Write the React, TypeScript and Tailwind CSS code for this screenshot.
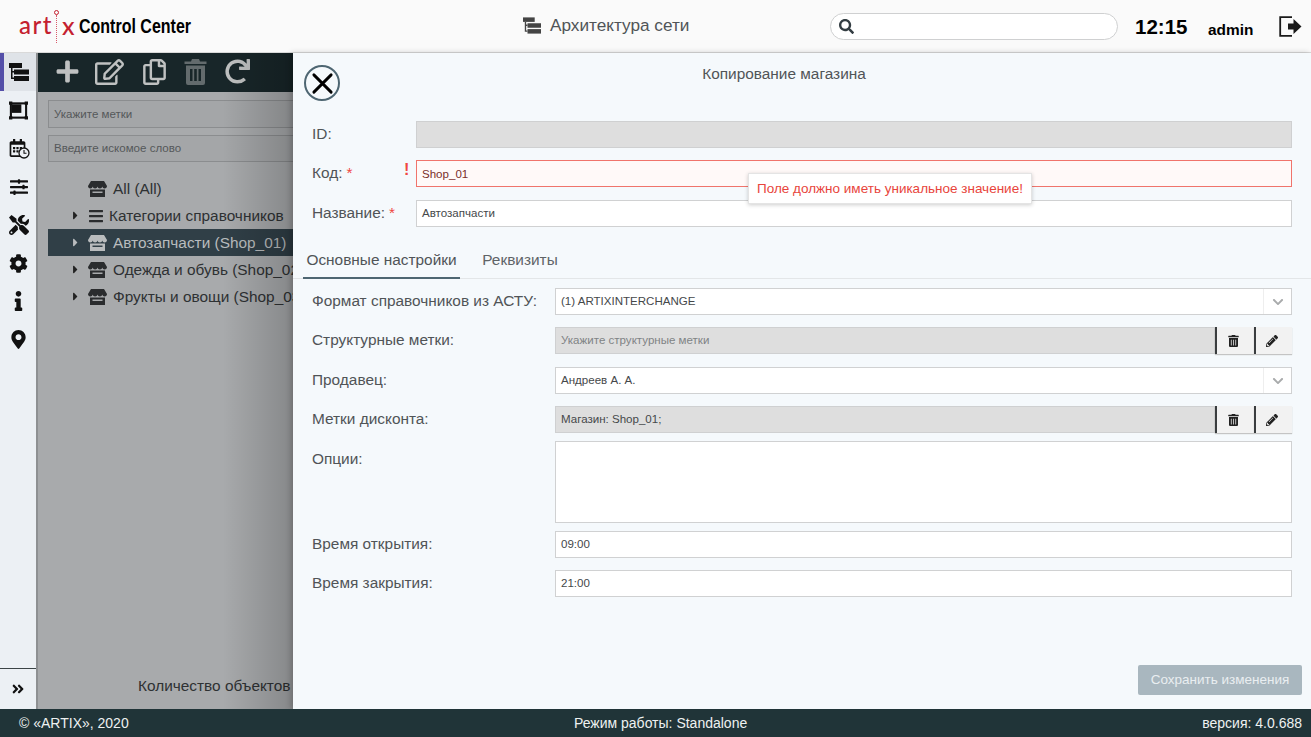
// App.tsx
import type { ReactNode } from 'react'
import {
  FaPlus, FaRegEdit, FaRegCopy, FaRedo, FaSlidersH, FaTools, FaCog, FaInfo,
  FaMapMarkerAlt, FaBars, FaCaretRight, FaSearch, FaTrashAlt, FaPencilAlt, FaChevronDown,
  FaRegCalendarAlt, FaAngleDoubleRight,
} from 'react-icons/fa'

function NetworkIcon({ className }: { className?: string }) {
  return (
    <svg viewBox="0 0 20 18" className={className} fill="currentColor">
      <rect x="0" y="0" width="13" height="5" />
      <rect x="5" y="6.500" width="15" height="5" />
      <rect x="5" y="13" width="15" height="5" />
      <path d="M2 5h1.500v3H5v1.500H3.500v5H5V16H2z" />
    </svg>
  )
}

function SplitIcon({ className }: { className?: string }) {
  return (
    <svg viewBox="0 0 20 19" className={className} fill="none" stroke="currentColor">
      <rect x="2" y="2" width="16" height="15" strokeWidth="2.200" />
      <rect x="3" y="3" width="10" height="9" fill="currentColor" stroke="none" />
      <path d="M0 0h3.500v3.500H0zM16.500 0H20v3.500h-3.500zM0 15.500h3.500V19H0zM16.500 15.500H20V19h-3.500z" fill="currentColor" stroke="none" />
    </svg>
  )
}

function CalendarClockIcon({ className }: { className?: string }) {
  return (
    <span className={`relative ${className}`}>
      <FaRegCalendarAlt className="w-[17px] h-[18px]" />
      <svg viewBox="0 0 12 12" className="absolute right-[-2px] bottom-[-1px] w-[12px] h-[12px] text-[#111]">
        <circle cx="6" cy="6" r="5" fill="#eceff3" stroke="currentColor" strokeWidth="1.300" />
        <path d="M6 3v3.300h2.500" fill="none" stroke="currentColor" strokeWidth="1.100" />
      </svg>
    </span>
  )
}

function StoreIcon({ className }: { className?: string }) {
  return (
    <svg viewBox="0 0 19 16" className={className} fill="currentColor">
      <path d="M3 0h13l3 5c0 1.500-1 2.500-2.300 2.500S14.500 6.500 14.300 5.500c-.2 1-1.200 2-2.400 2s-2.200-1-2.400-2c-.2 1-1.200 2-2.400 2s-2.200-1-2.400-2C4.500 6.500 3.600 7.500 2.300 7.500S0 6.500 0 5z" />
      <path d="M2 8.500h15V16H2zM4.500 10.500v1.500h10v-1.500z" fillRule="evenodd" />
    </svg>
  )
}

function LogoutIcon({ className }: { className?: string }) {
  return (
    <svg viewBox="0 0 23 21" className={className}>
      <path d="M13 1.200H1.200v18.600H13" fill="none" stroke="currentColor" strokeWidth="1.800" />
      <path d="M9 7.500h5.500V3l8 7.500-8 7.500v-4.500H9z" fill="currentColor" />
    </svg>
  )
}

function TrashIcon({ className }: { className?: string }) {
  return (
    <svg viewBox="0 0 22 26" className={className} fill="currentColor">
      <path d="M7.500 0h7l1 2.500H22v2.500H0V2.500h6.500z" />
      <path d="M1.500 6.500h19V24a2 2 0 0 1-2 2h-15a2 2 0 0 1-2-2zM5.500 10v12H8V10zM9.700 10v12h2.600V10zM14 10v12h2.500V10z" fillRule="evenodd" />
    </svg>
  )
}

function CloseIcon({ className }: { className?: string }) {
  return (
    <svg viewBox="0 0 24 24" className={className} fill="none" stroke="currentColor" strokeWidth="3" strokeLinecap="round">
      <path d="M3 3l18 18M21 3L3 21" />
    </svg>
  )
}

function Logo() {
  return (
    <div className="w-[60px] h-[36px] flex items-center text-[#c4202f] font-['Lato',sans-serif] text-[24px] leading-none">
      <span className="w-[31px] tracking-[1.500px] font-medium pb-[2px]">art</span>
      <span className="w-[12px] h-[36px] flex flex-col items-center pt-[2px]">
        <span className="w-[5px] h-[5px] rounded-full border border-[#c4202f]" />
        <span className="h-[28px] border-l border-dotted border-[#d8596a]" />
      </span>
      <span className="font-medium text-[25px] pb-[2px]">x</span>
    </div>
  )
}

const NAV_ITEMS = [
  <SplitIcon key="split" className="w-[19px] h-[19px]" />,
  <CalendarClockIcon key="cal" className="block w-[19px] h-[19px]" />,
  <FaSlidersH key="sl" className="w-[20px] h-[18px]" />,
  <FaTools key="tl" className="w-[20px] h-[20px]" />,
  <FaCog key="cg" className="w-[19px] h-[19px]" />,
  <FaInfo key="in" className="w-[19px] h-[20px]" />,
  <FaMapMarkerAlt key="mp" className="w-[15px] h-[19px]" />,
]

function Sidebar() {
  return (
    <div className="w-[38px] shrink-0 bg-[#ecf0f4] flex flex-col text-[#111] border-r-2 border-[#8e9092]">
      <div className="h-[38px] bg-[#dfe3e8] border-l-4 border-[#544fa8] flex items-center justify-center pr-[2px]">
        <NetworkIcon className="w-[20px] h-[18px]" />
      </div>
      {NAV_ITEMS.map((icon, i) => (
        <div key={i} className="h-[38.250px] flex items-center justify-center pl-[1px]">{icon}</div>
      ))}
      <div className="mt-auto h-[41px] border-t border-[#3b4446] flex items-center justify-center">
        <FaAngleDoubleRight className="w-[14px] h-[14px]" />
      </div>
    </div>
  )
}

function TreeRow({ text, arrow, selected, bars }: { text: string; arrow?: boolean; selected?: boolean; bars?: boolean }) {
  return (
    <div className={`h-[27px] flex items-center whitespace-nowrap text-[15.400px] ${selected ? 'bg-[#303f47] text-[#b9bcbe]' : 'text-[#2e3133]'}`}>
      <span className="w-[24px] ml-[22px] shrink-0">
        {arrow && <FaCaretRight className={`w-[11px] h-[13px] ${selected ? 'text-[#b9bcbe]' : 'text-[#222]'}`} />}
      </span>
      {bars ? (
        <FaBars className="w-[16px] h-[16px] mr-[5px] ml-[-6px] shrink-0 text-[#2a2c2e]" />
      ) : (
        <StoreIcon className={`w-[19px] h-[16px] mr-[6px] ml-[-6px] shrink-0 ${selected ? 'text-[#b9bcbe]' : 'text-[#2a2c2e]'}`} />
      )}
      {text}
    </div>
  )
}

function TreePanel() {
  return (
    <div className="w-[255px] shrink-0 relative bg-[#a8aaac] overflow-hidden flex flex-col">
      <div className="h-[39px] pb-[2px] bg-[#182629] flex items-center pl-[17px] text-[#bfc1c1]">
        <FaPlus className="w-[25px] h-[25px]" />
        <FaRegEdit className="w-[29px] h-[26px] ml-[15px]" />
        <FaRegCopy className="w-[23px] h-[26px] ml-[19px]" />
        <TrashIcon className="w-[23px] h-[26px] ml-[18px] text-[#636b6d]" />
        <FaRedo className="w-[25px] h-[25px] ml-[18px]" />
      </div>
      <div className="pl-[10px] pt-[8px] w-[340px] flex flex-col gap-[7px]">
        <div className="h-[28px] pt-[1px] border border-[#8b8d8f] bg-[#a4a6a8] flex items-center px-[5px] text-[11.550px] text-[#55585a]">Укажите метки</div>
        <div className="h-[27px] pt-[1px] border border-[#8b8d8f] bg-[#a4a6a8] flex items-center px-[5px] text-[11.550px] text-[#55585a]">Введите искомое слово</div>
      </div>
      <div className="mt-[13px] pl-[10px] w-[400px]">
        <TreeRow text="All (All)" />
        <TreeRow text="Категории справочников" arrow bars />
        <TreeRow text="Автозапчасти (Shop_01)" arrow selected />
        <TreeRow text="Одежда и обувь (Shop_02)" arrow />
        <TreeRow text="Фрукты и овощи (Shop_03)" arrow />
      </div>
      <div className="mt-auto pb-[12px] pl-[100px] text-[15.400px] text-[#2e3133] whitespace-nowrap">Количество объектов</div>
      <div className="absolute inset-y-0 right-0 w-[70px] bg-gradient-to-r from-transparent to-black/20" />
    </div>
  )
}

function Label({ children, required }: { children: ReactNode; required?: boolean }) {
  return (
    <span className="block pb-[2px] text-[15.400px] text-[#505457] whitespace-nowrap">
      {children}
      {required && <span className="text-[#f0473f] ml-[4px]">*</span>}
    </span>
  )
}

function Field({ label, required, left, mt, children }: { label: string; required?: boolean; left: string; mt: string; children: ReactNode }) {
  return (
    <div className={`flex items-center ${mt}`}>
      <div className={`${left} shrink-0`}><Label required={required}>{label}</Label></div>
      <div className="flex-1 min-w-0">{children}</div>
    </div>
  )
}

const boxCls = 'h-[27px] flex items-center px-[5px] text-[11.550px] text-[#45484a] border border-[#d0d1d2]'

function SelectBox({ value }: { value: string }) {
  return (
    <div className={`${boxCls} bg-white pr-0`}>
      <span className="flex-1">{value}</span>
      <span className="w-[28px] h-full border-l border-[#eeeeee] flex items-center justify-center text-[#a9abac]">
        <FaChevronDown className="w-[12px] h-[12px]" />
      </span>
    </div>
  )
}

function TagsBox({ value, muted }: { value: string; muted?: boolean }) {
  return (
    <div className="h-[27px] flex">
      <div className={`flex-1 flex items-center px-[5px] text-[11.550px] bg-[#dedede] border border-[#cfd0d1] ${muted ? 'text-[#808385]' : 'text-[#45484a]'}`}>{value}</div>
      <button className="w-[39px] flex items-center justify-center pr-[5px] border-l-2 border-[#3a3d3f] bg-[#f2f2f2] shadow-[0_1px_1px_#c4c4c4] text-[#222]">
        <FaTrashAlt className="w-[11px] h-[12px]" />
      </button>
      <button className="w-[38px] flex items-center justify-center pr-[5px] border-l-2 border-[#3a3d3f] bg-[#f2f2f2] shadow-[0_1px_1px_#c4c4c4] text-[#222]">
        <FaPencilAlt className="w-[12px] h-[12px]" />
      </button>
    </div>
  )
}

function Drawer() {
  return (
    <div className="flex-1 relative bg-[#f5f9fc] flex flex-col shadow-[-2px_0_6px_rgba(0,0,0,0.2)]">
      <div className="h-[68px] flex">
        <button className="w-[36px] h-[36px] ml-[11px] mt-[12px] rounded-full border-[2px] border-[#4e6672] flex items-center justify-center text-black">
          <CloseIcon className="w-[23px] h-[23px]" />
        </button>
        <div className="flex-1 pt-[9px] pr-[83px] text-center text-[15.400px] text-[#505457]">Копирование магазина</div>
      </div>

      <div className="px-[19px]">
        <Field label="ID:" left="w-[104px]" mt="">
          <div className="h-[27px] bg-[#dedede] border border-[#cfd0d1]" />
        </Field>
        <Field label="Код:" required left="w-[104px] pt-[1px]" mt="mt-[12px]">
          <div className="h-[27px] flex items-center pt-[2px] px-[5px] text-[11.550px] text-[#7a2e2a] bg-[#fff9f8] border border-[#f0746c]">Shop_01</div>
        </Field>
        <Field label="Название:" required left="w-[104px]" mt="mt-[13px]">
          <div className={`${boxCls} bg-white`}>Автозапчасти</div>
        </Field>
      </div>
      <span className="absolute left-[111px] top-[109px] text-[16px] font-bold leading-none text-[#f0473f]">!</span>
      <div className="absolute left-[455px] top-[120px] w-[284px] h-[31px] pt-[1px] flex items-center justify-center bg-white border border-[#e4e4e4] shadow-[0_1px_4px_rgba(0,0,0,0.2)] text-[13.500px] text-[#e8453c] whitespace-nowrap">
        Поле должно иметь уникальное значение!
      </div>

      <div className="mt-[18px] h-[34px] flex border-b border-[#e3e6e8] text-[15.400px] pl-[10px]">
        <div className="w-[157px] pb-[3px] flex items-center justify-center text-[#505457] border-b-2 border-[#4e6672] h-[34px]">Основные настройки</div>
        <div className="ml-[5px] w-[110px] pb-[3px] flex items-center justify-center text-[#5f6467]">Реквизиты</div>
      </div>

      <div className="px-[19px] mt-[9px]">
        <Field label="Формат справочников из АСТУ:" left="w-[243px]" mt="">
          <SelectBox value="(1) ARTIXINTERCHANGE" />
        </Field>
        <Field label="Структурные метки:" left="w-[243px] pt-[1px]" mt="mt-[12px]">
          <TagsBox value="Укажите структурные метки" muted />
        </Field>
        <Field label="Продавец:" left="w-[243px]" mt="mt-[13px]">
          <SelectBox value="Андреев А. А." />
        </Field>
        <Field label="Метки дисконта:" left="w-[243px]" mt="mt-[12px]">
          <TagsBox value="Магазин: Shop_01;" />
        </Field>
        <div className="flex mt-[8px]">
          <div className="w-[243px] shrink-0 pt-[6px]"><Label>Опции:</Label></div>
          <div className="flex-1 h-[82px] bg-white border border-[#d0d1d2]" />
        </div>
        <Field label="Время открытия:" left="w-[243px]" mt="mt-[8px]">
          <div className={`${boxCls} bg-white`}>09:00</div>
        </Field>
        <Field label="Время закрытия:" left="w-[243px]" mt="mt-[12px]">
          <div className={`${boxCls} bg-white`}>21:00</div>
        </Field>
      </div>

      <div className="mt-auto pb-[14px] pr-[9px] flex justify-end">
        <button className="w-[164px] h-[30px] pt-[1px] rounded-[2px] bg-[#a9b7bf] text-[13.500px] text-[#e9eef1]">Сохранить изменения</button>
      </div>
    </div>
  )
}

export default function App() {
  return (
    <div className="w-[1311px] h-[737px] overflow-hidden flex flex-col font-['Liberation_Sans',Arial,sans-serif]">
      <header className="h-[53px] shrink-0 bg-[#fafafa] border-b border-[#d9d9d9] flex items-center relative">
        <div className="ml-[19px]"><Logo /></div>
        <span className="text-[20px] font-bold text-black whitespace-nowrap origin-left scale-x-[0.8]">Control Center</span>
        <div className="absolute left-[523px] top-[13px] flex items-center gap-[9px] text-[#505457]">
          <NetworkIcon className="w-[18px] h-[17px] text-[#444]" />
          <span className="text-[17.200px]">Архитектура сети</span>
        </div>
        <div className="absolute left-[830px] top-[13px] w-[288px] h-[27px] rounded-full border border-[#cfd0d1] bg-white flex items-center pl-[8px]">
          <FaSearch className="w-[15px] h-[15px] text-[#333d42]" />
        </div>
        <span className="absolute left-[1135px] top-[14px] text-[20.500px] font-bold text-black leading-[26px]">12:15</span>
        <span className="absolute left-[1208px] top-[21px] text-[15.400px] font-bold text-black leading-[18px]">admin</span>
        <LogoutIcon className="absolute left-[1279px] top-[16px] w-[23px] h-[21px] text-[#1a1a1a]" />
      </header>
      <div className="flex-1 flex min-h-0">
        <Sidebar />
        <TreePanel />
        <Drawer />
      </div>
      <footer className="h-[28px] shrink-0 bg-[#203438] text-[#eef1f1] text-[14px] flex items-center relative px-[19px]">
        <span>© «ARTIX», 2020</span>
        <span className="absolute left-[574px]">Режим работы: Standalone</span>
        <span className="ml-auto mr-[-10px]">версия: 4.0.688</span>
      </footer>
    </div>
  )
}
